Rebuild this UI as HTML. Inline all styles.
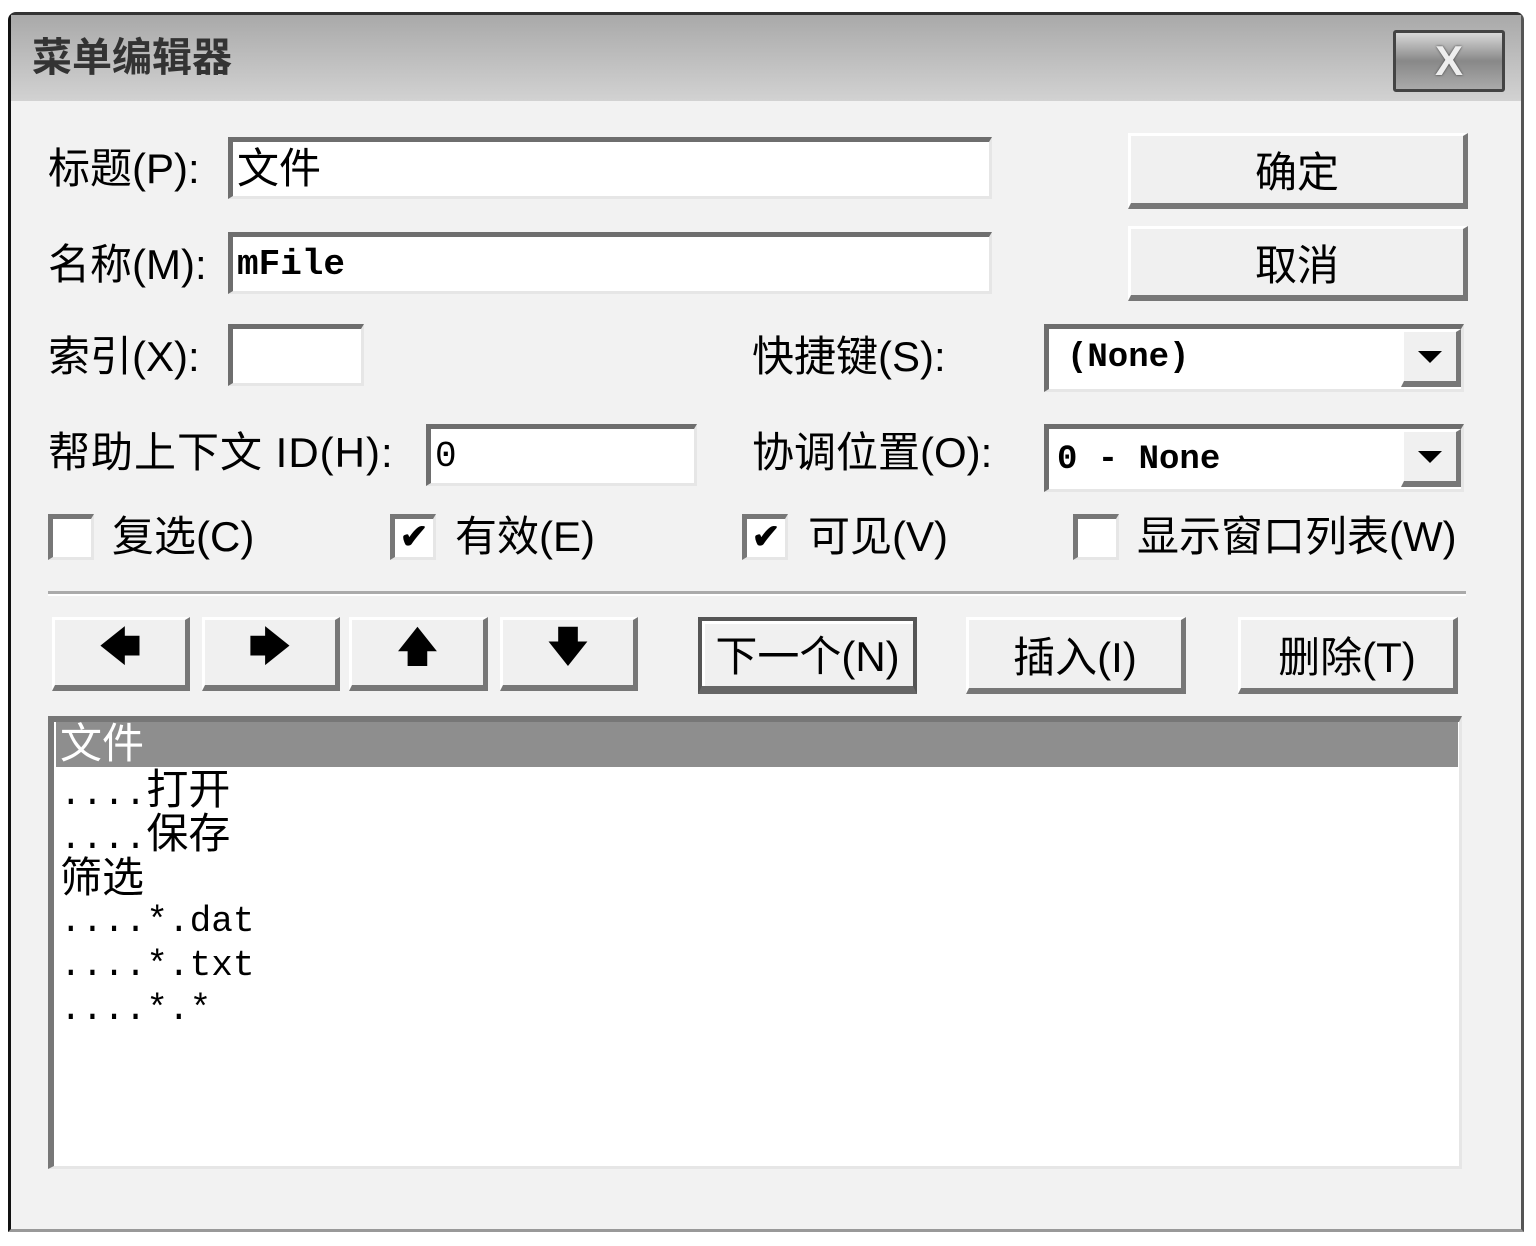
<!DOCTYPE html>
<html><head><meta charset="utf-8"><style>
*{margin:0;padding:0;box-sizing:border-box}
body{width:1536px;height:1246px;background:#fff;position:relative;overflow:hidden;font-family:"Liberation Sans","Noto Sans CJK SC","WenQuanYi Zen Hei",sans-serif;color:#000}
.a{position:absolute}
.win{left:8px;top:12px;width:1516px;height:1220px;background:#f2f2f2;border-left:3px solid #111;border-top:3px solid #333;border-right:3px solid #555;border-bottom:3px solid #999;border-radius:8px 8px 0 0}
.title{left:11px;top:15px;width:1510px;height:86px;background:linear-gradient(#a9a9a9,#d2d2d2);}
.lbl{font-size:42px;line-height:1;white-space:nowrap}
.in{background:#fff;border-top:5px solid #6e6e6e;border-left:5px solid #6e6e6e;border-right:3px solid #e6e6e6;border-bottom:3px solid #e6e6e6}
.btn{background:#f0f0f0;border-top:3px solid #fff;border-left:3px solid #fff;border-right:5px solid #777;border-bottom:6px solid #777;display:flex;align-items:center;justify-content:center;font-size:42px}
.cb{width:46px;height:46px;background:#fff;border-top:5px solid #777;border-left:5px solid #777;border-right:3px solid #e6e6e6;border-bottom:3px solid #e6e6e6;font-size:34px;font-weight:bold;line-height:36px;text-align:center}
.mono{font-family:"Liberation Mono","Noto Sans CJK SC",monospace}
.tri{width:0;height:0;border-left:12px solid transparent;border-right:12px solid transparent;border-top:12px solid #000}
.row{font-size:42px;line-height:44px;white-space:pre}
.dots{font-family:"Liberation Mono",monospace;font-size:36px}
</style></head><body>
<div class="a win"></div>
<div class="a title"></div>
<div class="a lbl" style="left:32px;top:38px;font-size:40px;color:#333;font-weight:bold">菜单编辑器</div>
<div class="a" style="left:1393px;top:30px;width:112px;height:62px;border:3px solid #444;background:linear-gradient(#d8d8d8,#888 50%,#aaa);color:#eee;font-size:42px;font-weight:bold;text-align:center;line-height:56px;border-radius:3px;text-shadow:0 0 2px #333">X</div>

<div class="a lbl" style="left:48px;top:148px">标题(P):</div>
<div class="a in" style="left:228px;top:137px;width:764px;height:62px"><span class="lbl" style="position:absolute;left:4px;top:6px">文件</span></div>
<div class="a lbl" style="left:48px;top:244px">名称(M):</div>
<div class="a in" style="left:228px;top:232px;width:764px;height:62px"><span class="lbl mono" style="position:absolute;left:4px;top:10px;font-size:36px;font-weight:bold">mFile</span></div>
<div class="a lbl" style="left:48px;top:336px">索引(X):</div>
<div class="a in" style="left:228px;top:324px;width:136px;height:62px"></div>
<div class="a lbl" style="left:48px;top:432px;letter-spacing:1px">帮助上下文 ID(H):</div>
<div class="a in" style="left:426px;top:424px;width:271px;height:62px"><span class="lbl mono" style="position:absolute;left:4px;top:10px;font-size:36px">0</span></div>

<div class="a btn" style="left:1128px;top:133px;width:340px;height:76px">确定</div>
<div class="a btn" style="left:1128px;top:226px;width:340px;height:75px">取消</div>

<div class="a lbl" style="left:752px;top:336px">快捷键(S):</div>
<div class="a in" style="left:1044px;top:324px;width:420px;height:68px"><span class="lbl mono" style="position:absolute;left:18px;top:12px;font-size:34px;font-weight:bold">(None)</span>
<div class="a btn" style="right:0;top:0;width:60px;height:58px"><div class="tri"></div></div></div>
<div class="a lbl" style="left:752px;top:432px">协调位置(O):</div>
<div class="a in" style="left:1044px;top:424px;width:420px;height:68px"><span class="lbl mono" style="position:absolute;left:8px;top:14px;font-size:34px;font-weight:bold">0 - None</span>
<div class="a btn" style="right:0;top:0;width:60px;height:58px"><div class="tri"></div></div></div>

<div class="a cb" style="left:48px;top:514px"></div>
<div class="a lbl" style="left:112px;top:516px">复选(C)</div>
<div class="a cb" style="left:390px;top:514px">✔</div>
<div class="a lbl" style="left:455px;top:516px">有效(E)</div>
<div class="a cb" style="left:742px;top:514px">✔</div>
<div class="a lbl" style="left:808px;top:516px">可见(V)</div>
<div class="a cb" style="left:1073px;top:514px"></div>
<div class="a lbl" style="left:1137px;top:516px">显示窗口列表(W)</div>

<div class="a" style="left:48px;top:591px;width:1418px;height:5px;background:#aaa;border-bottom:2px solid #fff"></div>

<div class="a btn" style="left:52px;top:617px;width:138px;height:74px">🡄</div>
<div class="a btn" style="left:202px;top:617px;width:138px;height:74px">🡆</div>
<div class="a btn" style="left:349px;top:617px;width:139px;height:74px">🡅</div>
<div class="a btn" style="left:500px;top:617px;width:138px;height:74px">🡇</div>
<div class="a btn" style="left:698px;top:617px;width:219px;height:77px;border:4px solid #555;border-bottom:8px solid #666;box-shadow:inset 3px 3px 0 #fff">下一个(N)</div>
<div class="a btn" style="left:966px;top:617px;width:220px;height:77px">插入(I)</div>
<div class="a btn" style="left:1238px;top:617px;width:220px;height:77px">删除(T)</div>

<div class="a" style="left:48px;top:716px;width:1414px;height:453px;background:#fff;border-top:6px solid #777;border-left:6px solid #777;border-right:3px solid #e6e6e6;border-bottom:3px solid #e6e6e6"></div>
<div class="a" style="left:56px;top:722px;width:1402px;height:45px;background:#8e8e8e"></div>
<div class="a row" style="left:60px;top:722px;color:#fff">文件</div>
<div class="a row" style="left:60px;top:768px"><span class="dots">....</span>打开</div>
<div class="a row" style="left:60px;top:812px"><span class="dots">....</span>保存</div>
<div class="a row" style="left:60px;top:856px">筛选</div>
<div class="a row mono" style="left:60px;top:900px;font-size:36px">....*.dat</div>
<div class="a row mono" style="left:60px;top:944px;font-size:36px">....*.txt</div>
<div class="a row mono" style="left:60px;top:988px;font-size:36px">....*.*</div>
</body></html>
